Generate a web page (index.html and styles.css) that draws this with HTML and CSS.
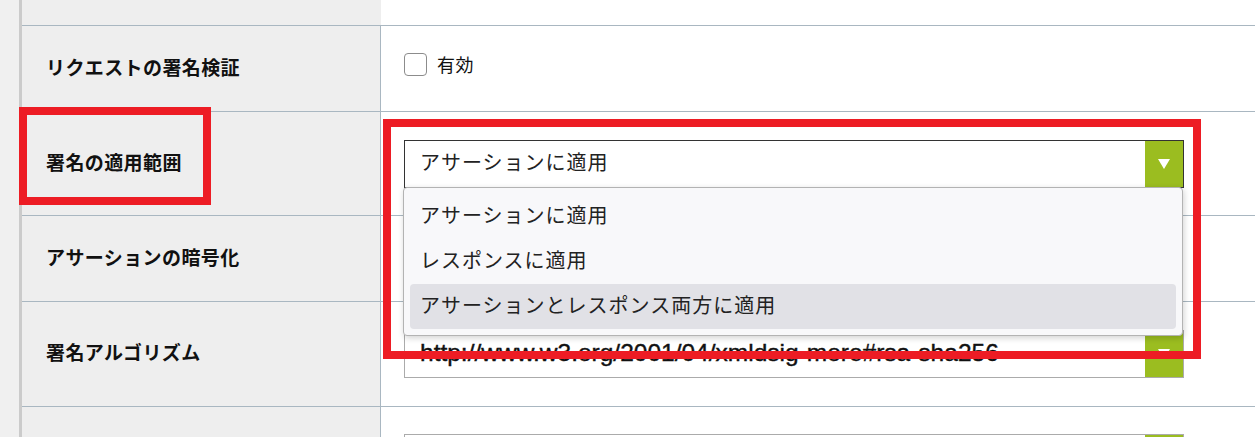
FILE: index.html
```html
<!DOCTYPE html>
<html lang="ja">
<head>
<meta charset="utf-8">
<title>署名設定</title>
<link rel="stylesheet" href="styles.css">
</head>
<body>
<div class="page">
  <div class="rail"></div>
  <div class="form">
    <div class="row row-top">
      <div class="label label-top"></div>
      <div class="value"></div>
    </div>
    <div class="row row-short">
      <div class="label">リクエストの署名検証</div>
      <div class="value">
        <label class="check"><span class="box"></span><span class="check-text">有効</span></label>
      </div>
    </div>
    <div class="row row-tall">
      <div class="label">署名の適用範囲</div>
      <div class="value">
        <div class="select-wrap">
          <div class="select select-open">
            <span class="select-text">アサーションに適用</span>
            <span class="select-btn"><span class="tri"></span></span>
          </div>
          <div class="dropdown">
            <div class="option">アサーションに適用</div>
            <div class="option">レスポンスに適用</div>
            <div class="option option-hover">アサーションとレスポンス両方に適用</div>
          </div>
        </div>
      </div>
    </div>
    <div class="row row-short">
      <div class="label">アサーションの暗号化</div>
      <div class="value"></div>
    </div>
    <div class="row row-tall2">
      <div class="label">署名アルゴリズム</div>
      <div class="value">
        <div class="select">
          <span class="select-text select-latin">http://www.w3.org/2001/04/xmldsig-more#rsa-sha256</span>
          <span class="select-btn"><span class="tri"></span></span>
        </div>
      </div>
    </div>
    <div class="row row-last">
      <div class="label"></div>
      <div class="value value-last">
        <div class="select">
          <span class="select-text"></span>
          <span class="select-btn"><span class="tri"></span></span>
        </div>
      </div>
    </div>
  </div>
  <div class="annot annot-label"></div>
  <div class="annot annot-field"></div>
</div>
</body>
</html>
```

FILE: styles.css
```css
* { box-sizing: border-box; }
html, body {
  margin: 0;
  padding: 0;
  background: #ffffff;
  overflow: hidden;
}
body {
  font-family: "Noto Sans CJK JP", "Noto Sans", sans-serif;
  color: #111;
}
.page {
  position: relative;
  display: flex;
  width: 1255px;
  height: 437px;
  overflow: hidden;
}
.rail {
  width: 22px;
  flex: none;
  background: #f0f0f0;
  border-right: 3px solid #cbcbcb;
}
.form {
  flex: 1;
  display: flex;
  flex-direction: column;
}
.row {
  display: grid;
  grid-template-columns: 359px 1fr;
  border-bottom: 1px solid #a9b7c1;
  flex: none;
}
.row-top { height: 26px; }
.row-short { height: 86px; }
.row-tall { height: 104px; }
.row-tall2 { height: 105px; }
.row-last { flex: 1; border-bottom: none; }
.label {
  background: #eeeeee;
  border-right: 1px solid #a9b7c1;
  display: flex;
  align-items: center;
  padding-left: 24px;
  padding-bottom: 5px;
  font-weight: 700;
  font-size: 19px;
  letter-spacing: 0.4px;
  color: #111;
}
.label-top { border-right: none; width: 359px; }
.value {
  display: flex;
  align-items: center;
  padding-left: 23px;
}
.value-last { align-items: flex-start; padding-top: 27px; }
.check {
  display: flex;
  align-items: center;
  gap: 10px;
  margin-bottom: 8px;
}
.box {
  width: 23px;
  height: 23px;
  border: 1.5px solid #8c8c8c;
  border-radius: 4px;
  background: #fff;
}
.check-text {
  font-size: 18px;
  letter-spacing: 0.5px;
  color: #111;
  padding-bottom: 1px;
}
.select-wrap { position: relative; }
.select {
  width: 780px;
  height: 48px;
  border: 1px solid #ababab;
  background: #fff;
  display: flex;
  align-items: center;
  justify-content: space-between;
}
.select-open { border-color: #333; }
.select-text {
  padding-left: 15px;
  padding-bottom: 4px;
  font-size: 20px;
  letter-spacing: 1px;
  color: #222;
  white-space: nowrap;
}
.select-latin {
  font-family: "Liberation Sans", Arial, sans-serif;
  font-size: 24.5px;
  font-weight: 400;
  letter-spacing: 0;
  padding-bottom: 2px;
  color: #111;
  -webkit-text-stroke: 0.4px #111;
}
.select-btn {
  width: 38px;
  align-self: stretch;
  background: #9bbd20;
  display: flex;
  align-items: center;
  justify-content: center;
}
.tri {
  width: 0;
  height: 0;
  border-left: 6px solid transparent;
  border-right: 6px solid transparent;
  border-top: 10px solid #fff;
}
.dropdown {
  position: absolute;
  left: -1px;
  top: 47px;
  width: 780px;
  padding: 6px;
  background: #f8f8fa;
  border: 1px solid #b3b3b3;
  border-radius: 4px;
  box-shadow: 1px 2px 6px rgba(0, 0, 0, 0.18);
  z-index: 5;
}
.option {
  height: 45px;
  display: flex;
  align-items: center;
  padding-left: 10px;
  padding-bottom: 4px;
  font-size: 20px;
  letter-spacing: 1px;
  color: #222;
  border-radius: 4px;
}
.option-hover { background: #e1e1e6; }
.annot {
  position: absolute;
  border: 8px solid #ed1c24;
  z-index: 10;
}
.annot-label {
  left: 19px;
  top: 107px;
  width: 192px;
  height: 98px;
}
.annot-field {
  left: 383px;
  top: 119px;
  width: 818px;
  height: 240px;
}
```
